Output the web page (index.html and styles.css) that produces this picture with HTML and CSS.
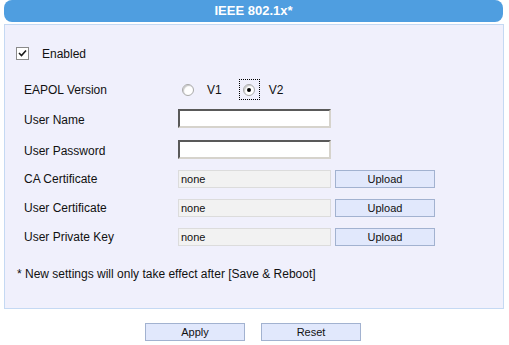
FILE: index.html
```html
<!DOCTYPE html>
<html>
<head>
    <title>IEEE 802.1x</title>
    <meta charset="utf-8">
    <link rel="stylesheet" href="styles.css">
</head>
<body>
    <div class="page">
        <div class="header">IEEE 802.1x*</div>

        <div class="panel">
            <div class="row row-enabled">
                <span class="checkbox checked">
                    <svg width="9" height="9" viewBox="0 0 9 9"><path d="M1 4 L3.5 6.5 L8 1.5" fill="none" stroke="#1a1a1a" stroke-width="1.6"/></svg>
                </span>
                <span class="enabled-text">Enabled</span>
            </div>

            <div class="row row-eapol">
                <span class="label">EAPOL Version</span>
                <div class="radios">
                    <span class="radio"></span>
                    <span class="radio-text">V1</span>
                    <span class="focus-box"><span class="radio checked"></span></span>
                    <span class="radio-text v2">V2</span>
                </div>
            </div>

            <div class="row row-text">
                <span class="label shift">User Name</span>
                <input type="text" class="text-input">
            </div>
            <div class="row row-text">
                <span class="label shift">User Password</span>
                <input type="password" class="text-input">
            </div>

            <div class="row row-file first">
                <span class="label">CA Certificate</span>
                <div class="file-field">none</div>
                <button class="btn">Upload</button>
            </div>
            <div class="row row-file">
                <span class="label">User Certificate</span>
                <div class="file-field">none</div>
                <button class="btn">Upload</button>
            </div>
            <div class="row row-file">
                <span class="label">User Private Key</span>
                <div class="file-field">none</div>
                <button class="btn">Upload</button>
            </div>

            <p class="note">* New settings will only take effect after [Save &amp; Reboot]</p>
        </div>

        <div class="actions">
            <button class="btn">Apply</button>
            <button class="btn">Reset</button>
        </div>
    </div>
</body>
</html>
```

FILE: styles.css
```css
body {
    margin: 0;
    font-family: "Liberation Sans", Arial, sans-serif;
    font-size: 12px;
    color: #111;
    background-color: #fff;
}
.page {
    width: 500px;
    margin-left: 4px;
}
.header {
    width: 499px;
    height: 22px;
    line-height: 22px;
    background-color: #4f9ee0;
    color: #fff;
    font-weight: bold;
    font-size: 13px;
    text-align: center;
    border-radius: 8px;
}
.panel {
    margin-top: 2px;
    background-color: #f0f0fc;
    border: 1px solid #c5d9f3;
    padding: 18px 0 27px 0;
}
.row {
    display: flex;
    align-items: center;
}
.label {
    width: 154px;
    padding-left: 19px;
    line-height: 14px;
}
.label.shift {
    padding-top: 3px;
}
.row-enabled {
    height: 20px;
    padding-left: 11px;
}
.checkbox {
    width: 11px;
    height: 11px;
    border: 1px solid #8a8a8a;
    background-color: #fff;
    display: flex;
    align-items: center;
    justify-content: center;
}
.enabled-text {
    margin-left: 13px;
    padding-top: 1px;
}
.row-eapol {
    height: 21px;
    margin-top: 16px;
}
.radios {
    display: flex;
    align-items: center;
}
.radio {
    width: 10px;
    height: 10px;
    border-radius: 50%;
    border: 1px solid #a9a9a9;
    background-color: #fff;
    box-shadow: inset 1px 1px 1px #c8c8c8;
    margin-left: 4px;
    display: flex;
    align-items: center;
    justify-content: center;
}
.radio.checked {
    margin-left: 0;
}
.radio.checked::after {
    content: "";
    width: 4px;
    height: 4px;
    border-radius: 50%;
    background-color: #000;
}
.radio-text {
    margin-left: 13px;
}
.radio-text.v2 {
    margin-left: 9px;
}
.focus-box {
    margin-left: 17px;
    width: 19px;
    height: 19px;
    border: 1px dotted #000;
    display: flex;
    align-items: center;
    justify-content: center;
}
.row-text {
    margin-top: 9px;
}
.row-text + .row-text {
    margin-top: 12px;
}
.text-input {
    width: 153px;
    height: 19px;
    box-sizing: border-box;
    margin: 0;
    padding: 0 2px;
    border: 2px solid;
    border-color: #595959 #d6d3cc #d6d3cc #595959;
    background-color: #fff;
    font-family: "Liberation Sans", Arial, sans-serif;
    font-size: 12px;
}
.row-file {
    margin-top: 11px;
}
.row-file.first {
    margin-top: 11px;
}
.file-field {
    width: 153px;
    height: 18px;
    box-sizing: border-box;
    border: 1px solid #dcdcdc;
    background-color: #f2f2f2;
    padding-left: 2px;
    line-height: 16px;
    font-size: 11px;
}
.btn {
    width: 100px;
    height: 18px;
    box-sizing: border-box;
    margin: 0;
    padding: 0;
    border: 1px solid #a2b2d0;
    background-color: #e1e8fc;
    color: #111;
    font-family: "Liberation Sans", Arial, sans-serif;
    font-size: 11px;
    cursor: pointer;
}
.row-file .btn {
    margin-left: 4px;
}
.note {
    margin: 21px 0 0 12px;
    line-height: 14px;
}
.actions {
    display: flex;
    justify-content: center;
    gap: 16px;
    margin-top: 14px;
    padding-right: 2px;
}
```
